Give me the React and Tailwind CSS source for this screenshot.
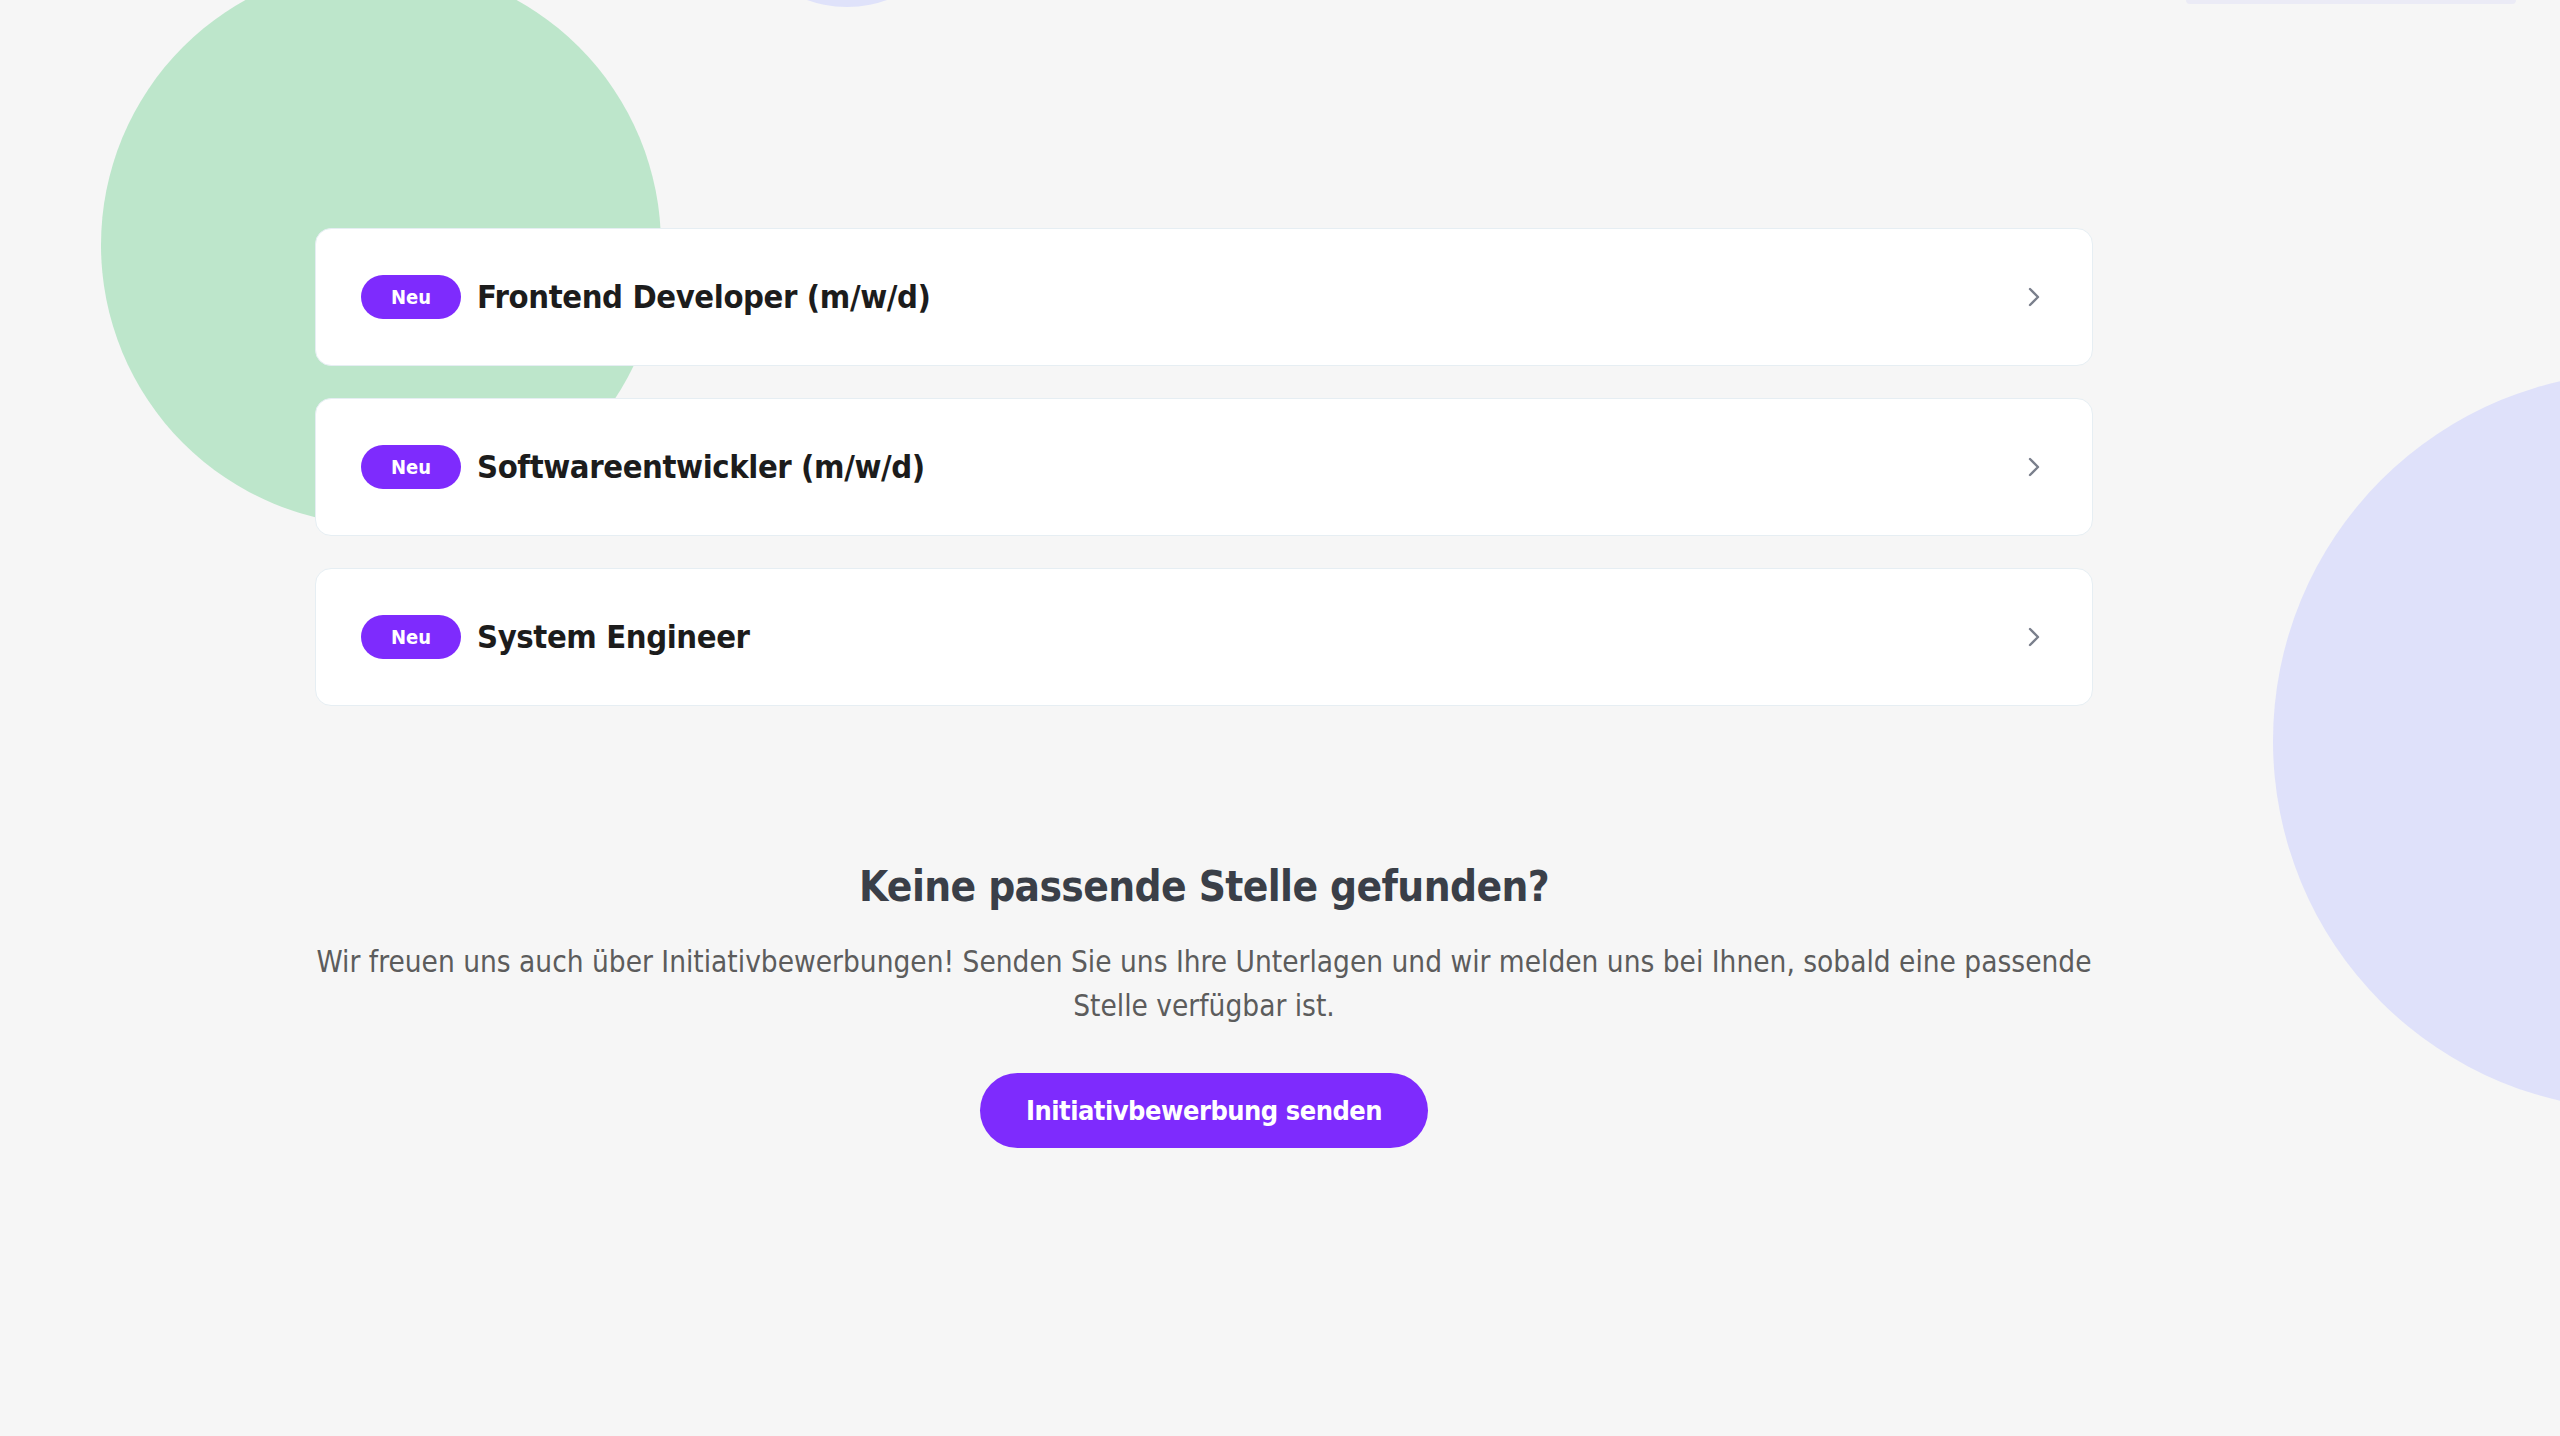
import React from "react";
import { ChevronRight } from "lucide-react";

const jobs = [
  { title: "Frontend Developer (m/w/d)" },
  { title: "Softwareentwickler (m/w/d)" },
  { title: "System Engineer" },
];

const font = { fontFamily: '"DejaVu Sans", Verdana, sans-serif', fontStretch: "condensed" };

function JobCard({ title }) {
  return (
    <a
      href="#"
      className="flex h-[138px] items-center justify-between rounded-[16px] border border-[#e6eef3] bg-white pl-[45px] pr-[42px]"
    >
      <div className="flex items-center gap-[16px]">
        <span className="flex h-[44px] w-[100px] items-center justify-center rounded-full bg-[#7e2bfd] text-[20px] font-bold text-white">
          Neu
        </span>
        <span className="text-[32.5px] font-semibold tracking-[-0.4px] text-[#1c1c1c]">{title}</span>
      </div>
      <ChevronRight size={32} strokeWidth={1.8} className="text-[#7a7f8c]" />
    </a>
  );
}

export default function App() {
  return (
    <div className="relative h-[1436px] overflow-hidden bg-[#f6f6f6]" style={font}>
      {/* background shapes */}
      <div className="absolute left-[101px] top-[-35px] h-[560px] w-[560px] rounded-full bg-[#bde6cb]" />
      <div className="absolute left-[729px] top-[-229px] h-[236px] w-[236px] rounded-full bg-[#dfe2fa]" />
      <div className="absolute left-[2273px] top-[372px] h-[738px] w-[738px] rounded-full bg-[#dfe1fa]" />
      <div className="absolute left-[2186px] top-0 h-[4px] w-[330px] rounded-b-md bg-[#ebebf6]" />

      <main className="relative ml-[315px] w-[1778px] pt-[228px]">
        <div className="flex flex-col gap-[32px]">
          {jobs.map((job) => (
            <JobCard key={job.title} title={job.title} />
          ))}
        </div>

        <section className="mt-[156px] flex flex-col items-center text-center">
          <h2 className="text-[42px] font-bold leading-[1.2] tracking-[-0.6px] text-[#3a3f48]">
            Keine passende Stelle gefunden?
          </h2>
          <p className="mt-[28px] text-[29.5px] leading-[44px] text-[#5c5c5c]">
            Wir freuen uns auch über Initiativbewerbungen! Senden Sie uns Ihre Unterlagen und wir melden uns bei Ihnen, sobald eine passende Stelle verfügbar ist.
          </p>
          <button className="mt-[45px] h-[75px] rounded-full bg-[#7e2bfd] px-[46px] text-[27px] font-semibold tracking-[-0.5px] text-white">
            Initiativbewerbung senden
          </button>
        </section>
      </main>
    </div>
  );
}
